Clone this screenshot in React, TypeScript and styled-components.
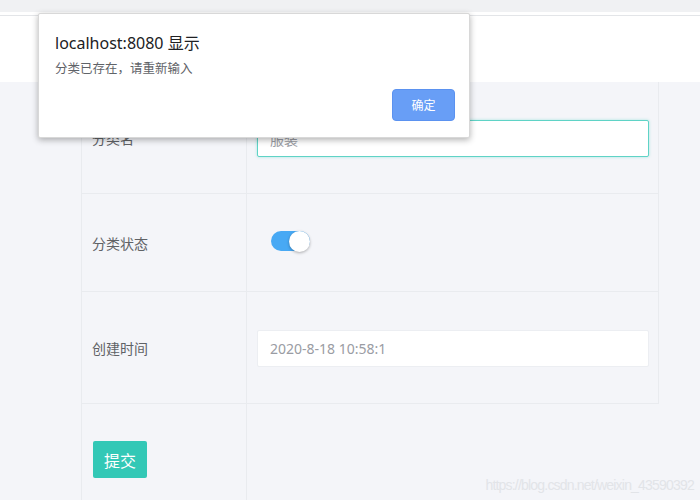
import React from "react";
import styled, { createGlobalStyle } from "styled-components";

const GlobalStyle = createGlobalStyle`
  html, body {
    margin: 0;
    padding: 0;
    background: #f4f5f9;
    font-family: "Noto Sans", "Noto Sans CJK SC", sans-serif;
  }
`;

const App = () => {
  return (
    <>
      <GlobalStyle />
      <Page>
        <TopStrip />
        <Header />
        <Main>
          <Table>
            <Row height={112}>
              <LabelCell>分类名</LabelCell>
              <FieldCell>
                <TextInput focused defaultValue="服装" />
              </FieldCell>
            </Row>
            <Row height={98}>
              <LabelCell>分类状态</LabelCell>
              <FieldCell>
                <Switch>
                  <Knob />
                </Switch>
              </FieldCell>
            </Row>
            <Row height={112}>
              <LabelCell>创建时间</LabelCell>
              <FieldCell>
                <TextInput defaultValue="2020-8-18 10:58:1" />
              </FieldCell>
            </Row>
            <Row height={112} open>
              <LabelCell>
                <SubmitButton>提交</SubmitButton>
              </LabelCell>
              <FieldCell />
            </Row>
          </Table>
        </Main>
        <Watermark>https://blog.csdn.net/weixin_43590392</Watermark>
        <AlertDialog>
          <AlertTitle>localhost:8080 显示</AlertTitle>
          <AlertMessage>分类已存在，请重新输入</AlertMessage>
          <AlertActions>
            <OkButton>确定</OkButton>
          </AlertActions>
        </AlertDialog>
      </Page>
    </>
  );
};

const Page = styled.div`
  position: relative;
  width: 700px;
  height: 500px;
  overflow: hidden;
  background: #f4f5f9;
`;

const TopStrip = styled.div`
  height: 12px;
  background: #f0f1f3;
`;

const Header = styled.header`
  height: 70px;
  background: #fff;
  box-shadow: inset 0 3px 0 #fff, inset 0 4px 0 #e3e5e8;
`;

const Main = styled.main`
  padding-left: 81px;
`;

const Table = styled.div`
  width: 578px;
  display: flex;
  flex-direction: column;
`;

const Row = styled.div<{ height: number; open?: boolean }>`
  display: grid;
  grid-template-columns: 165px 1fr;
  height: ${(p) => p.height}px;
  box-sizing: border-box;
  border-left: 1px solid #e9ebef;
  border-right: 1px solid ${(p) => (p.open ? "transparent" : "#e9ebef")};
  border-bottom: 1px solid ${(p) => (p.open ? "transparent" : "#e9ebef")};
`;

const LabelCell = styled.div`
  display: flex;
  align-items: center;
  padding-left: 10px;
  border-right: 1px solid #e9ebef;
  font-size: 14px;
  color: #606266;
`;

const FieldCell = styled.div`
  display: flex;
  align-items: center;
  padding: 0 9px 0 10px;
`;

const TextInput = styled.input<{ focused?: boolean }>`
  box-sizing: border-box;
  width: 100%;
  height: 37px;
  margin-top: 2px;
  padding: 0 12px;
  border: 1px solid ${(p) => (p.focused ? "#5fd3c6" : "#eceef2")};
  border-radius: 2px;
  background: #fff;
  box-shadow: ${(p) => (p.focused ? "0 0 3px rgba(72, 206, 190, 0.45)" : "none")};
  font-family: "Noto Sans", "Noto Sans CJK SC", sans-serif;
  font-size: 14px;
  color: #9a9ca3;
  outline: none;
`;

const Switch = styled.div`
  position: relative;
  width: 39px;
  height: 20px;
  margin-left: 14px;
  margin-top: -4px;
  border-radius: 10px;
  background: #48a9f4;
`;

const Knob = styled.span`
  position: absolute;
  right: 0;
  top: 0;
  width: 21px;
  height: 21px;
  border-radius: 50%;
  background: #fff;
  box-shadow: 0 1px 3px rgba(0, 0, 0, 0.3);
`;

const SubmitButton = styled.button`
  width: 54px;
  height: 37px;
  margin-left: 1px;
  border: none;
  border-radius: 2px;
  background: #33c8b6;
  color: #fff;
  font-family: "Noto Sans", "Noto Sans CJK SC", sans-serif;
  font-size: 16px;
  padding: 0;
`;

const Watermark = styled.div`
  position: absolute;
  right: 6px;
  bottom: 7px;
  font-family: "Liberation Sans", Arial, sans-serif;
  font-size: 14px;
  letter-spacing: -0.8px;
  color: #e2e4e8;
`;

const AlertDialog = styled.div`
  position: absolute;
  left: 38px;
  top: 13px;
  width: 432px;
  height: 125px;
  box-sizing: border-box;
  padding: 19px 14px 0 16px;
  background: #fff;
  border: 1px solid #d8d8d8;
  border-radius: 2px;
  box-shadow: 0 2px 6px rgba(0, 0, 0, 0.3);
  display: flex;
  flex-direction: column;
`;

const AlertTitle = styled.div`
  font-size: 16px;
  line-height: 20px;
  color: #202124;
`;

const AlertMessage = styled.div`
  margin-top: 8px;
  font-size: 12.5px;
  line-height: 16px;
  color: #5f6368;
`;

const AlertActions = styled.div`
  display: flex;
  justify-content: flex-end;
  margin-top: 12px;
`;

const OkButton = styled.button`
  width: 63px;
  height: 32px;
  padding: 0;
  border: 1px solid #5b92f0;
  border-radius: 4px;
  background: #689ef6;
  color: #fff;
  font-family: "Noto Sans", "Noto Sans CJK SC", sans-serif;
  font-size: 12px;
`;

export default App;
